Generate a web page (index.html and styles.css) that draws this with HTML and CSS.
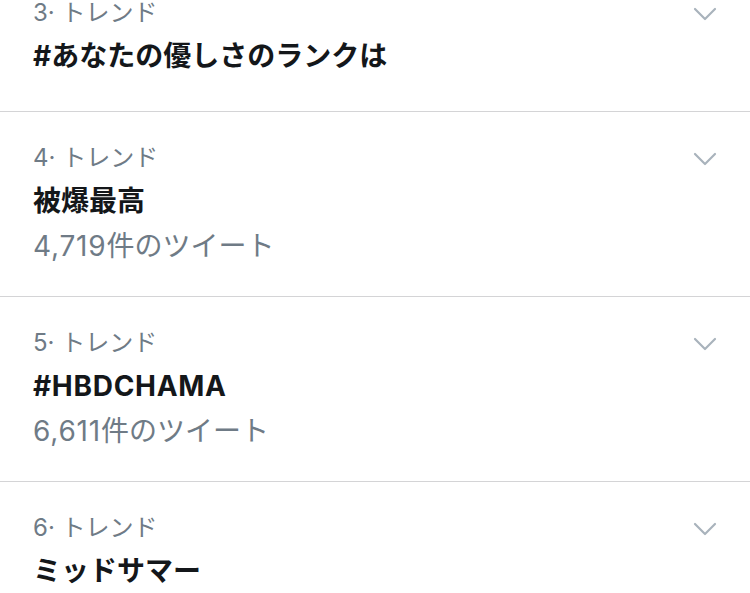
FILE: index.html
```html
<!DOCTYPE html>
<html lang="ja">
<head>
    <meta charset="UTF-8">
    <meta name="viewport" content="width=device-width, initial-scale=1.0">
    <title>トレンド</title>
    <link rel="stylesheet" href="styles.css">
</head>
<body>
    <ul class="trends">
        <li class="trend trend-short">
            <div class="trend-info">
                <div class="trend-label">3·&nbsp;トレンド</div>
                <div class="trend-name">#あなたの優しさのランクは</div>
            </div>
            <svg class="chevron" width="24" height="14" viewBox="0 0 24 14"><polyline points="2,2 12,12 22,2"/></svg>
        </li>
        <li class="trend">
            <div class="trend-info">
                <div class="trend-label">4·&nbsp;トレンド</div>
                <div class="trend-name">被爆最高</div>
                <div class="trend-count"><span class="num">4,719</span>件のツイート</div>
            </div>
            <svg class="chevron" width="24" height="14" viewBox="0 0 24 14"><polyline points="2,2 12,12 22,2"/></svg>
        </li>
        <li class="trend">
            <div class="trend-info">
                <div class="trend-label">5·&nbsp;トレンド</div>
                <div class="trend-name"><span class="latin">#HBDCHAMA</span></div>
                <div class="trend-count"><span class="num">6,611</span>件のツイート</div>
            </div>
            <svg class="chevron" width="24" height="14" viewBox="0 0 24 14"><polyline points="2,2 12,12 22,2"/></svg>
        </li>
        <li class="trend trend-short">
            <div class="trend-info">
                <div class="trend-label">6·&nbsp;トレンド</div>
                <div class="trend-name">ミッドサマー</div>
            </div>
            <svg class="chevron" width="24" height="14" viewBox="0 0 24 14"><polyline points="2,2 12,12 22,2"/></svg>
        </li>
    </ul>
</body>
</html>
```

FILE: styles.css
```css
body {
    margin: 0;
    background-color: #fff;
    font-family: Inter, "Noto Sans CJK JP", sans-serif;
    overflow: hidden;
}

/* list is scrolled: the first row is cut at the top */
.trends {
    list-style: none;
    margin: -33px 0 0;
    padding: 0;
}

.trend {
    display: flex;
    justify-content: space-between;
    align-items: flex-start;
    padding: 30px 33px 32px;
    border-bottom: 1px solid #d4d4d6;
}

.trend-short {
    padding-bottom: 36px;
}

.trend-label {
    font-size: 24px;
    line-height: 32px;
    color: #6f7b86;
}

.trend-name {
    margin-top: 8px;
    font-size: 28px;
    line-height: 38px;
    font-weight: 700;
    color: #14171a;
}

.trend-name .latin {
    letter-spacing: 0.7px;
}

.trend-count {
    margin-top: 8px;
    font-size: 28px;
    line-height: 36px;
    color: #6f7b86;
}

.trend-count .num {
    letter-spacing: 0.8px;
}

.chevron {
    margin-top: 10px;
    fill: none;
    stroke: #a9b3bc;
    stroke-width: 2.2;
    stroke-linecap: round;
    stroke-linejoin: round;
}
```
